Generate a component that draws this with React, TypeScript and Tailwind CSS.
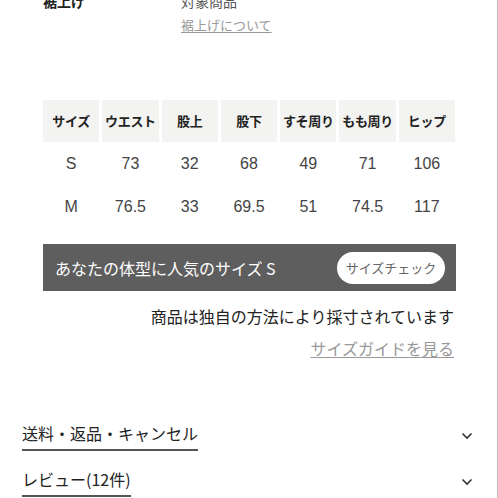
import React from 'react';

const headers = ['サイズ', 'ウエスト', '股上', '股下', 'すそ周り', 'もも周り', 'ヒップ'];
const rows = [
  ['S', '73', '32', '68', '49', '71', '106'],
  ['M', '76.5', '33', '69.5', '51', '74.5', '117'],
];

const Chevron = () => (
  <svg width="12" height="8" viewBox="0 0 12 8" fill="none" stroke="#333" strokeWidth="1.6">
    <path d="M1.5 1.5 L6 6 L10.5 1.5" />
  </svg>
);

export default function App() {
  return (
    <div
      className="w-[498px] h-[498px] overflow-hidden bg-white text-[#222] border-r border-[#bdbdbd]"
      style={{ fontFamily: '"Noto Sans CJK JP", "Noto Sans", sans-serif' }}
    >
      {/* 裾上げ */}
      <div className="mt-[-9px] flex pl-[43px]">
        <div className="w-[138px] text-[14px] font-bold leading-[20px]">裾上げ</div>
        <div className="flex flex-col">
          <span className="text-[14px] leading-[20px] text-[#555]">対象商品</span>
          <span className="mt-[4px] text-[13px] leading-[20px] text-[#999] underline underline-offset-2">裾上げについて</span>
        </div>
      </div>

      {/* サイズ表 */}
      <div className="mx-[43px] mt-[65px] w-[412px]">
        <div className="grid grid-cols-7 gap-[3px]">
          {headers.map((h) => (
            <div key={h} className="flex h-[42px] items-center justify-center bg-[#f3f3f1] text-[13px] font-bold tracking-tight">
              {h}
            </div>
          ))}
        </div>
        {rows.map((r) => (
          <div key={r[0]} className="grid grid-cols-7 gap-[3px]">
            {r.map((v, i) => (
              <div key={i} className="flex h-[43px] items-center justify-center text-[16px] text-[#444]" style={{ fontFamily: '"Liberation Sans", sans-serif' }}>
                {v}
              </div>
            ))}
          </div>
        ))}
      </div>

      {/* おすすめサイズ */}
      <div className="mx-[43px] mt-[16px] flex h-[47px] w-[413px] items-center justify-between bg-[#5e5e5e] pl-[12px] pr-[11px]">
        <span className="text-[16px] text-white">あなたの体型に人気のサイズ S</span>
        <span className="flex h-[32px] w-[108px] items-center justify-center rounded-full bg-white text-[13px] text-[#666]">サイズチェック</span>
      </div>

      <div className="mr-[43px] mt-[13px] text-right text-[16px] leading-[24px] text-[#222]">商品は独自の方法により採寸されています</div>
      <div className="mr-[43px] mt-[8px] text-right text-[16px] leading-[24px] text-[#999] underline underline-offset-2">サイズガイドを見る</div>

      {/* アコーディオン */}
      <div className="mt-[61px] flex flex-col pl-[22px] pr-[24px]">
        <div className="flex items-center justify-between">
          <span className="border-b-2 border-[#555] pb-[4px] text-[16px] leading-[24px]">送料・返品・キャンセル</span>
          <Chevron />
        </div>
        <div className="mt-[16px] flex items-center justify-between">
          <span className="border-b-2 border-[#555] pb-[4px] text-[16px] leading-[24px]">レビュー(12件)</span>
          <Chevron />
        </div>
      </div>
    </div>
  );
}
